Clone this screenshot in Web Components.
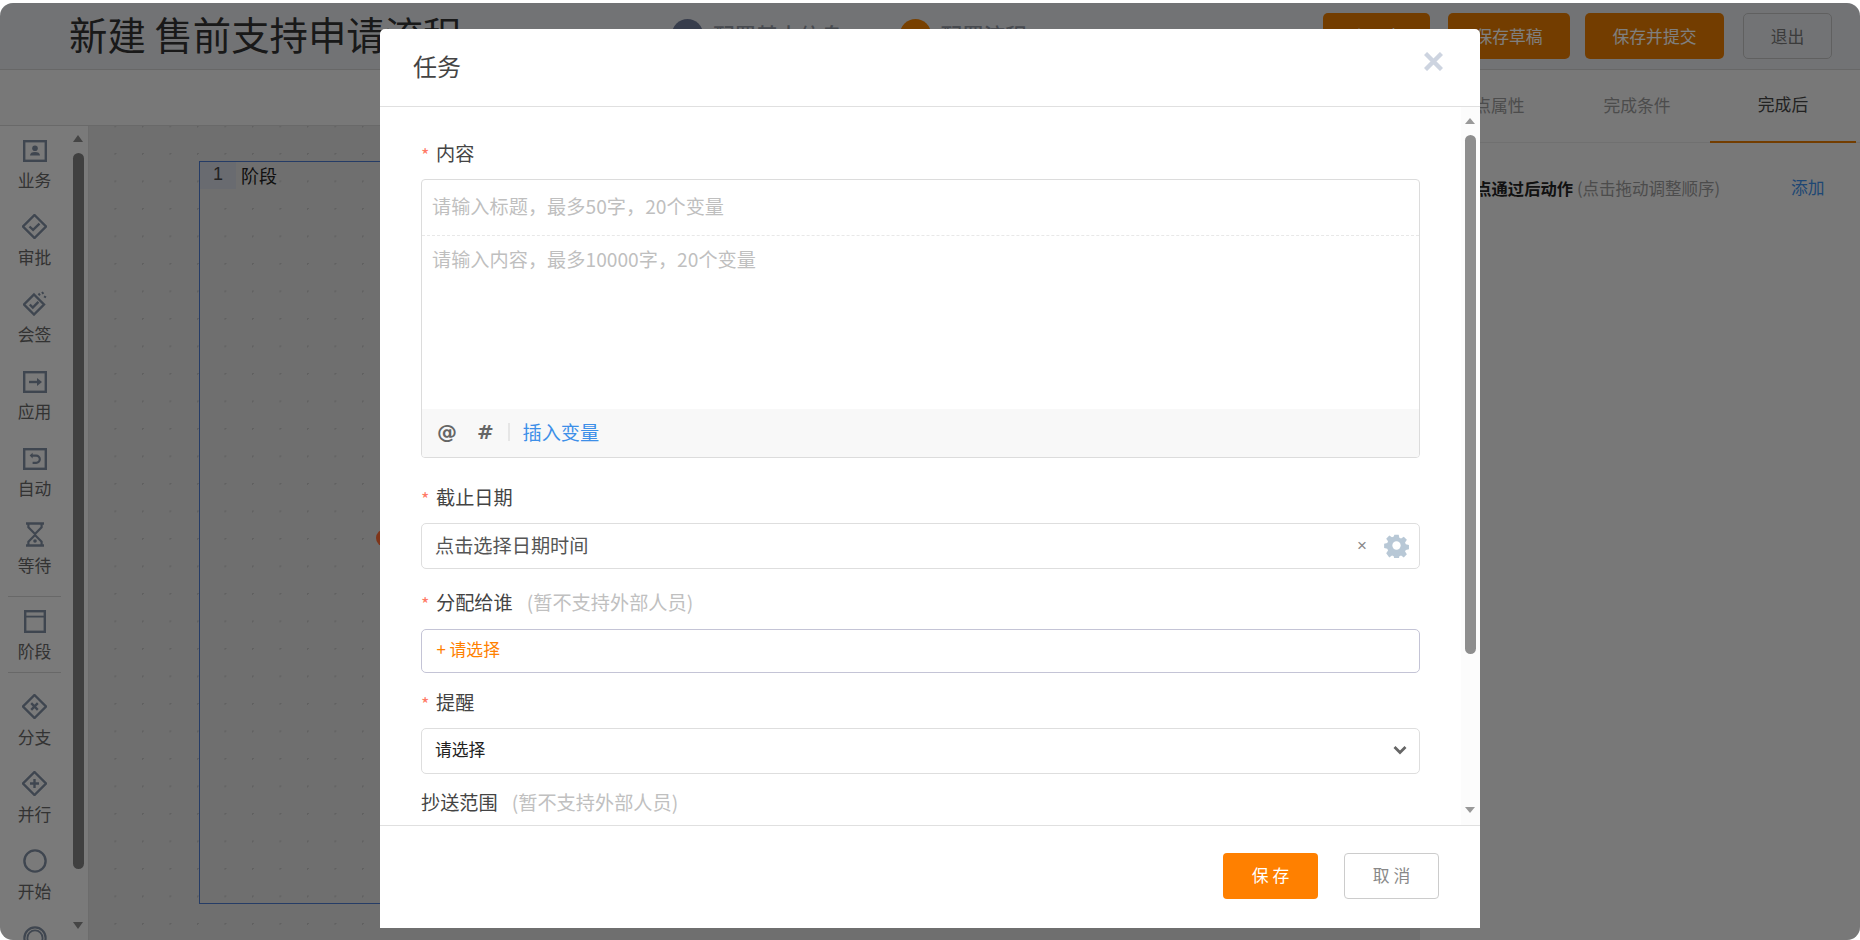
<!DOCTYPE html>
<html lang="zh-CN">
<head>
<meta charset="utf-8">
<title>新建 售前支持申请流程</title>
<style>
html,body{margin:0;padding:0;width:1860px;height:940px;overflow:hidden;background:#fff;}
body{font-family:"Noto Sans CJK SC","Noto Sans",sans-serif;}
</style>
</head>
<body>
<x-app>
  <x-header slot="header"></x-header>
  <x-toolbar-band slot="band"></x-toolbar-band>
  <x-palette slot="palette"></x-palette>
  <x-canvas slot="canvas"></x-canvas>
  <x-props slot="props"></x-props>
  <x-task-modal slot="modal"></x-task-modal>
</x-app>

<script>
const FONT = '"Noto Sans CJK SC","Noto Sans",sans-serif';
function def(name, html){
  customElements.define(name, class extends HTMLElement{
    constructor(){super();const r=this.attachShadow({mode:'open'});r.innerHTML=typeof html==='function'?html(this):html;}
  });
}

def('x-app', `<style>
:host{display:block;position:relative;width:1860px;height:937px;margin-top:3px;border-radius:13px;overflow:hidden;background:#f0f0f0;font-family:${FONT};}
.wrap{display:grid;grid-template-columns:89px 1331px 1fr;grid-template-rows:67px 56px 814px;height:937px;}
.h{grid-column:1/4}.b{grid-column:1/4}
.ov{position:absolute;inset:0;background:rgba(0,0,0,.5);}
</style>
<div class="wrap">
<div class="h"><slot name="header"></slot></div>
<div class="b"><slot name="band"></slot></div>
<slot name="palette"></slot>
<slot name="canvas"></slot>
<slot name="props"></slot>
</div>
<div class="ov"></div>
<slot name="modal"></slot>`);

def('x-btn', `<style>
:host{display:inline-flex;align-items:center;justify-content:center;box-sizing:border-box;height:46px;border-radius:5px;font-size:16.8px;line-height:24px;}
:host([kind=primary]){background:#e67a00;color:#fff;}
:host([kind=ghost]){background:transparent;color:#777;border:1.5px solid #c0c0c0;}
</style><slot></slot>`);

def('x-step', `<style>
:host{display:flex;align-items:center;gap:10px;font-size:21.6px;line-height:30px;font-weight:500;color:#8f949e;}
.c{width:31px;height:31px;border-radius:50%;background:var(--c,#6f7a98);color:#fff;display:flex;align-items:center;justify-content:center;font-size:16.8px;}
</style><span class="c"><slot name="n"></slot></span><slot></slot>`);

def('x-header', `<style>
:host{display:flex;align-items:flex-start;box-sizing:border-box;height:67px;background:#e4e7eb;border-bottom:1.5px solid #cfcfcf;}
h1{margin:6px 0 0 69px;font-size:38.4px;line-height:48px;font-weight:400;color:#333;white-space:nowrap;width:394px;flex:none;}
.steps{display:flex;gap:57px;margin:16px 0 0 209px;}
.btns{margin:10px 28px 0 auto;display:flex;gap:16px;}
.a{width:107px}.b{width:122px;margin-left:2px}.c{width:139px;margin-left:-1px}.d{width:89px;margin-left:3px}
</style>
<h1>新建 售前支持申请流程</h1>
<div class="steps">
  <x-step><span slot="n">1</span>配置基本信息</x-step>
  <x-step style="--c:#f08000"><span slot="n">2</span>配置流程</x-step>
</div>
<div class="btns">
  <x-btn kind="primary" class="a">上一步</x-btn>
  <x-btn kind="primary" class="b">保存草稿</x-btn>
  <x-btn kind="primary" class="c">保存并提交</x-btn>
  <x-btn kind="ghost" class="d">退出</x-btn>
</div>`);

def('x-toolbar-band', `<style>:host{display:block;box-sizing:border-box;height:56px;background:#f0f0f0;border-bottom:1.5px solid #d2d2d2;}</style>`);

const ICONS = {
 biz:`<rect x="1.2" y="1.2" width="21.6" height="19.6" fill="none" stroke-width="2.4"/><circle cx="12" cy="8.2" r="2.8" stroke="none"/><path d="M7 15.6c0-2.6 2-3.6 5-3.6s5 1 5 3.6z" stroke="none"/>`,
 approve:`<path d="M12.5 1 24 12.5 12.5 24 1 12.5z" fill="none" stroke-width="2.4"/><path d="M7.5 12.5l3.6 3.4 6.4-6.2" fill="none" stroke-width="2.4"/>`,
 sign:`<path d="M11 3.5 21 13.5 11 23.5 1 13.5z" fill="none" stroke-width="2.4"/><path d="M6.8 13.5l3 3 5.6-5.6" fill="none" stroke-width="2.4"/><path d="M15.5 2.5l1.5 1.8M19 1l1.4 1.8M21 5.4l2 1" fill="none" stroke-width="2"/>`,
 app:`<rect x="1.2" y="1.2" width="21.6" height="19.6" fill="none" stroke-width="2.4"/><path d="M6 11h10" fill="none" stroke-width="2.4"/><path d="M14 7l5 4-5 4z" stroke="none"/>`,
 auto:`<rect x="1.2" y="1.2" width="21.6" height="19.6" fill="none" stroke-width="2.4"/><path d="M8.2 7.6h5a3.6 3.6 0 0 1 0 7.2h-3.6" fill="none" stroke-width="2.2"/><path d="M9.6 4.8v5.6L6.6 7.6z" stroke="none"/>`,
 wait:`<path d="M2 1.5h18M2 23.5h18" fill="none" stroke-width="2.6"/><path d="M4.4 2v3.4L11 12l6.6-6.6V2M4.4 23v-3.4L11 13l6.6 6.6V23" fill="none" stroke-width="2.2"/><circle cx="11" cy="19" r="1.8" stroke="none"/>`,
 stage:`<rect x="1.2" y="1.2" width="19.6" height="20.6" fill="none" stroke-width="2.4"/><path d="M1 6.6h20" fill="none" stroke-width="1.8"/>`,
 branch:`<path d="M12.5 1 24 12.5 12.5 24 1 12.5z" fill="none" stroke-width="2.4"/><path d="M9.2 9.2l6.6 6.6M15.8 9.2l-6.6 6.6" fill="none" stroke-width="2.4"/>`,
 par:`<path d="M12.5 1 24 12.5 12.5 24 1 12.5z" fill="none" stroke-width="2.4"/><path d="M12.5 8v9M8 12.5h9" fill="none" stroke-width="2.4"/>`,
 start:`<circle cx="12" cy="12" r="10.6" fill="none" stroke-width="2.4"/>`,
 end:`<circle cx="12" cy="12" r="10.6" fill="none" stroke-width="2.2"/><circle cx="12" cy="12" r="7.6" fill="none" stroke-width="1.8"/>`
};

def('x-tool', t=>{
  const k=t.getAttribute('icon');
  const w=+t.getAttribute('w')||24,h=+t.getAttribute('h')||22;
  return `<style>
:host{display:flex;flex-direction:column;align-items:center;box-sizing:border-box;width:69px;height:77px;color:#666;font-size:16.8px;line-height:24px;}
.ic{display:flex;align-items:flex-end;justify-content:center;padding-bottom:6px;box-sizing:border-box;height:42px;}
svg{display:block;stroke:#7f8da0;fill:#7f8da0;}
</style><div class="ic"><svg width="${w}" height="${h}" viewBox="0 0 ${w} ${h}">${ICONS[k]}</svg></div><span><slot></slot></span>`;
});

def('x-palette', `<style>
:host{display:block;position:relative;box-sizing:border-box;width:89px;height:814px;background:#f4f4f4;border-right:1.5px solid #d8d8d8;overflow:hidden;}
hr{margin:0;border:0;border-top:1.5px solid #d0d0d0;width:53px;margin-left:8px;}
.s1{margin-top:8px}
.th{position:absolute;left:73px;top:27px;width:11px;height:716px;border-radius:6px;background:#808080;}
.up,.dn{position:absolute;left:73px;width:0;height:0;border-left:5.5px solid transparent;border-right:5.5px solid transparent;}
.up{top:9px;border-bottom:7px solid #8a8a8a;}
.dn{top:796px;border-top:7px solid #8a8a8a;}
</style>
<div class="list">
<x-tool icon="biz" h="22">业务</x-tool>
<x-tool icon="approve" w="25" h="25">审批</x-tool>
<x-tool icon="sign" h="25">会签</x-tool>
<x-tool icon="app">应用</x-tool>
<x-tool icon="auto">自动</x-tool>
<x-tool icon="wait" w="22" h="25">等待</x-tool>
<hr class="s1">
<x-tool icon="stage" w="22" h="23" style="height:75px">阶段</x-tool>
<hr>
<x-tool icon="branch" w="25" h="25" style="margin-top:10px">分支</x-tool>
<x-tool icon="par" w="25" h="25">并行</x-tool>
<x-tool icon="start" h="24">开始</x-tool>
<x-tool icon="end" h="24"></x-tool>
</div>
<div class="up"></div><div class="th"></div><div class="dn"></div>`);

def('x-stage', `<style>
:host{position:absolute;left:110px;top:35px;display:block;box-sizing:border-box;width:900px;height:743px;border:1.5px solid #4a78cc;color:#222;}
.n{position:absolute;left:0;top:0;width:36px;height:27px;background:#d2d6e0;text-align:center;color:#444;font:18px/25px "Liberation Sans",sans-serif;}
.t{position:absolute;left:41px;top:0;font-size:18px;line-height:26px;}
</style><span class="n"><slot name="n"></slot></span><span class="t"><slot></slot></span>`);

def('x-canvas', `<style>
:host{display:block;position:relative;height:814px;background-color:#dedede;overflow:hidden;
background-image:radial-gradient(circle at .75px .75px,#c2c2c2 .8px,transparent 1px);background-size:27.5px 27.5px;background-position:25.5px 27px;}
.dot{position:absolute;left:287px;top:403px;width:18px;height:18px;border-radius:50%;background:#ff6a33;}
</style><x-stage><span slot="n">1</span>阶段</x-stage><span class="dot"></span>`);

def('x-tab', `<style>
:host{display:flex;align-items:center;justify-content:center;width:146px;height:74px;box-sizing:border-box;padding-bottom:2px;font-size:16.8px;color:#999;}
:host([active]){color:#444;border-bottom:2.5px solid #e67a00;}
</style><slot></slot>`);

def('x-props', `<style>
:host{display:block;position:relative;background:#f0f0f0;margin-top:-56px;height:870px;font-size:16.8px;}
.tabs{display:flex;height:74px;margin-left:-2px;margin-top:-1px;width:442px;border-bottom:1.5px solid #e0e0e0;box-sizing:border-box;}
.row{display:flex;align-items:center;height:28px;margin-top:31px;padding-left:39px;line-height:26px;white-space:nowrap;}
b{color:#222;font-weight:700;font-size:16.3px;}
.hint{color:#999;margin-left:4px;font-size:16.5px;}
.add{color:#3d8fe8;position:absolute;left:371px;top:105px;line-height:24px;}
</style>
<div class="tabs"><x-tab>节点属性</x-tab><x-tab>完成条件</x-tab><x-tab active>完成后</x-tab></div>
<div class="row"><b>节点通过后动作</b><span class="hint">(点击拖动调整顺序)</span></div>
<span class="add">添加</span>`);

def('x-field-label', `<style>
:host{display:flex;align-items:flex-start;height:24px;font-size:19.2px;line-height:22px;color:#444;white-space:nowrap;}
.s{color:#ff7a66;font-size:18px;width:15px;flex:none;position:relative;top:1px;box-sizing:border-box;}
.h{color:#c0c0c0;margin-left:14px;}
</style><span class="s"><slot name="star"></slot></span><slot></slot><span class="h"><slot name="hint"></slot></span>`);

def('x-editor', `<style>
:host{display:block;box-sizing:border-box;width:999px;height:279px;margin-top:13px;border:1px solid #dcdcdc;border-radius:4px;font-size:19.2px;color:#bfbfbf;overflow:hidden;line-height:26px;}
.t{box-sizing:border-box;height:56px;padding:13px 10px;border-bottom:1px dashed #e8e8e8;}
.c{box-sizing:border-box;height:173px;padding:10px 10px;}
.b{display:flex;align-items:center;height:48px;padding-bottom:2px;box-sizing:border-box;background:#f8f8f8;color:#666;}
.at,.ha{font-family:"DejaVu Sans",sans-serif;font-weight:700;font-size:20px;line-height:24px;}
.at{margin-left:15px;width:40px;}
.ha{width:31px;}
i{display:block;width:1.5px;height:18px;background:#e6e6e6;margin-right:13px;}
a{color:#3d8fe8;}
</style>
<div class="t">请输入标题，最多50字，20个变量</div>
<div class="c">请输入内容，最多10000字，20个变量</div>
<div class="b"><span class="at">@</span><span class="ha">#</span><i></i><a>插入变量</a></div>`);

def('x-box', `<style>
:host{display:flex;align-items:center;box-sizing:border-box;width:999px;height:46px;margin-top:13px;padding:0 13px 3px;border:1.5px solid #dedede;border-radius:5px;font-size:19.2px;color:#555;position:relative;}
:host([tone=pick]){height:44px;margin-top:14px;padding-left:14.5px;padding-bottom:4px;border-color:#c4c4d6;font-size:16.8px;color:#ff8000;}
:host([tone=sel]){font-size:16.8px;color:#222;padding-bottom:4px;}
.r{margin-left:auto;display:flex;align-items:center;position:relative;top:1px;}
</style><slot></slot><span class="r"><slot name="end"></slot></span>`);

def('x-footer-btn', `<style>
:host{display:flex;align-items:center;justify-content:center;box-sizing:border-box;width:95px;height:46px;padding-bottom:2px;border-radius:4px;font-size:16.8px;letter-spacing:4px;text-indent:4px;}
:host([kind=ok]){background:#ff8000;color:#fff;}
:host([kind=no]){background:#fff;color:#888;border:1.5px solid #ccc;}
</style><slot></slot>`);

def('x-task-modal', `<style>
:host{position:absolute;left:380px;top:26px;width:1100px;height:899px;display:flex;flex-direction:column;background:#fff;border-radius:5px 5px 0 0;font-family:${FONT};}
.hd{position:relative;flex:none;box-sizing:border-box;height:78px;border-bottom:1px solid #e0e0e0;}
h2{margin:0;position:absolute;left:33px;top:21px;font-size:24px;line-height:32px;font-weight:400;color:#444;}
.x{position:absolute;left:1044px;top:23px;display:block;}
.bd{position:relative;flex:none;height:718px;overflow:hidden;box-sizing:border-box;padding:35px 0 0 41px;}
.f{box-sizing:border-box;height:103px;border-top:1.5px solid #e0e0e0;display:flex;justify-content:flex-end;gap:26px;padding:27px 41px 0 0;}
.track{position:absolute;right:0;top:0;bottom:0;width:19px;background:#fcfcfc;}
.up,.dn{position:absolute;left:4px;width:0;height:0;border-left:5.5px solid transparent;border-right:5.5px solid transparent;}
.up{top:11px;border-bottom:6.5px solid #999;}
.dn{bottom:12px;border-top:6.5px solid #999;}
.th{position:absolute;left:4px;top:28px;width:11px;height:519px;border-radius:6px;background:#8e8e8e;}
.g2{margin-top:28px}.g3{margin-top:22px}.g4{margin-top:18px}.g5{margin-top:17px}
.times{color:#888;font-size:17px;line-height:20px;margin-right:17px;font-family:"Liberation Sans",sans-serif;}
.gear,.chev{display:block;}
</style>
<div class="hd"><h2>任务</h2>
<svg class="x" width="19" height="19" viewBox="0 0 19 19"><path d="M1.5 1.5l16 16M17.5 1.5l-16 16" stroke="#cdd4e0" stroke-width="4.4" fill="none"/></svg>
</div>
<div class="bd">
<x-field-label><span slot="star">*</span>内容</x-field-label>
<x-editor></x-editor>
<x-field-label class="g2"><span slot="star">*</span>截止日期</x-field-label>
<x-box>点击选择日期时间<span slot="end" class="times">×</span>
  <svg slot="end" class="gear" width="25" height="25" viewBox="0 0 24 24" style="margin-right:-3px"><path fill="#b8c8d6" fill-rule="evenodd" d="M9.6 0h4.8l.7 3.5 1.9.8 3-2 3.4 3.4-2 3 .8 1.9 3.5.7v4.8l-3.5.7-.8 1.9 2 3-3.4 3.4-3-2-1.9.8-.7 3.5H9.6l-.7-3.5-1.9-.8-3 2L.6 20.4l2-3-.8-1.9L-1.7 14.8V10l3.5-.7.8-1.9-2-3L4 .9l3 2 1.9-.8z" transform="translate(1.6 1.6) scale(.87)"/><circle cx="12" cy="12" r="4" fill="#fff"/></svg></x-box>
<x-field-label class="g3"><span slot="star">*</span>分配给谁<span slot="hint">(暂不支持外部人员)</span></x-field-label>
<x-box tone="pick">+ 请选择</x-box>
<x-field-label class="g4"><span slot="star">*</span>提醒</x-field-label>
<x-box tone="sel">请选择<svg slot="end" class="chev" width="14" height="10" viewBox="0 0 14 10" style="margin-right:-1px"><path d="M1.5 2l5.5 5.5L12.5 2" fill="none" stroke="#666" stroke-width="2.8"/></svg></x-box>
<x-field-label class="g5" style="margin-left:-15px"><span slot="star"></span>抄送范围<span slot="hint">(暂不支持外部人员)</span></x-field-label>
<div class="track"><div class="up"></div><div class="th"></div><div class="dn"></div></div>
</div>
<div class="f"><x-footer-btn kind="ok">保存</x-footer-btn><x-footer-btn kind="no">取消</x-footer-btn></div>`);
</script>
</body>
</html>
